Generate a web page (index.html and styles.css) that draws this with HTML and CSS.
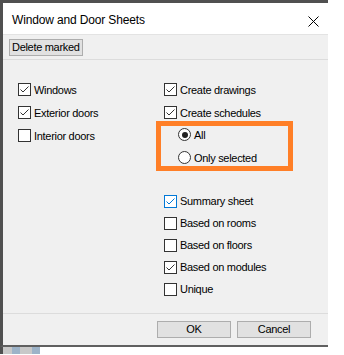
FILE: index.html
```html
<!DOCTYPE html>
<html lang="en">

<head>
    <meta charset="UTF-8">
    <meta name="viewport" content="width=device-width, initial-scale=1.0">
    <title>Window and Door Sheets</title>
    <link rel="stylesheet" href="styles.css">
</head>

<body>
    <div class="dialog">
        <div class="titlebar">
            <span class="title">Window and Door Sheets</span>
            <svg class="close" width="11" height="11" viewBox="0 0 11 11">
                <path d="M0.5 0.5 L10.5 10.5 M10.5 0.5 L0.5 10.5" stroke="#000" stroke-width="1" fill="none" />
            </svg>
        </div>

        <div class="toolbar">
            <button class="button small">Delete marked</button>
        </div>

        <div class="content">
            <div class="col left">
                <label class="row"><span class="check"><svg viewBox="0 0 11 11"><path d="M1.5 5.5 L4 8 L9.5 2.5" /></svg></span>Windows</label>
                <label class="row"><span class="check"><svg viewBox="0 0 11 11"><path d="M1.5 5.5 L4 8 L9.5 2.5" /></svg></span>Exterior doors</label>
                <label class="row"><span class="check"></span>Interior doors</label>
            </div>

            <div class="col right">
                <label class="row"><span class="check"><svg viewBox="0 0 11 11"><path d="M1.5 5.5 L4 8 L9.5 2.5" /></svg></span>Create drawings</label>
                <label class="row"><span class="check"><svg viewBox="0 0 11 11"><path d="M1.5 5.5 L4 8 L9.5 2.5" /></svg></span>Create schedules</label>

                <div class="radios">
                    <div class="marker"></div>
                    <label class="row"><span class="radio on"></span>All</label>
                    <label class="row"><span class="radio"></span>Only selected</label>
                </div>

                <div class="options">
                    <label class="row"><span class="check focus"><svg viewBox="0 0 11 11"><path d="M1.5 5.5 L4 8 L9.5 2.5" /></svg></span>Summary sheet</label>
                    <label class="row"><span class="check"></span>Based on rooms</label>
                    <label class="row"><span class="check"></span>Based on floors</label>
                    <label class="row"><span class="check"><svg viewBox="0 0 11 11"><path d="M1.5 5.5 L4 8 L9.5 2.5" /></svg></span>Based on modules</label>
                    <label class="row"><span class="check"></span>Unique</label>
                </div>
            </div>
        </div>

        <div class="footer">
            <button class="button">OK</button>
            <button class="button">Cancel</button>
        </div>
    </div>

    <div class="taskbar">
        <span class="tile"></span>
        <span class="tile blue"></span>
        <span class="tile wide"></span>
        <span class="tile blue"></span>
    </div>
</body>

</html>
```

FILE: styles.css
```css
body {
    margin: 0;
    background-color: #fff;
    font-family: "Liberation Sans", Arial, sans-serif;
    font-size: 11px;
    color: #000;
}

.dialog {
    width: 325px;
    border-top: 3px solid #505050;
    border-left: 3px solid #505050;
    border-bottom: 2px solid #606060;
    background-color: #f0f0f0;
}

.titlebar {
    height: 31px;
    background-color: #fff;
    border-bottom: 1px solid #e3e3e3;
    display: flex;
    align-items: center;
    justify-content: space-between;
    padding: 0 9px 0 9px;
}

.title {
    font-size: 12px;
    letter-spacing: -0.15px;
    margin-top: 2px;
}

.close {
    margin-top: 5px;
}

.toolbar {
    height: 25px;
    box-sizing: border-box;
    border-bottom: 1px solid #dcdcdc;
    padding: 4px 0 0 6px;
}

.button {
    font-family: "Liberation Sans", Arial, sans-serif;
    font-size: 11px;
    letter-spacing: -0.3px;
    color: #000;
    background-color: #e1e1e1;
    border: 1px solid #adadad;
    height: 17px;
    width: 74px;
    padding: 0;
    margin: 0;
    line-height: 15px;
    white-space: nowrap;
}

.button.small {
    width: auto;
    padding: 0 2px;
}

.content {
    height: 253px;
    box-sizing: border-box;
    padding: 18px 0 0 15px;
    display: flex;
}

.col.left {
    width: 146px;
}

.row {
    display: flex;
    align-items: center;
    height: 23px;
    letter-spacing: -0.3px;
}

.check {
    width: 11px;
    height: 11px;
    border: 1px solid #333;
    background-color: #fff;
    margin-right: 3px;
    flex-shrink: 0;
}

.check svg {
    display: block;
    width: 11px;
    height: 11px;
}

.check path {
    fill: none;
    stroke: #333;
    stroke-width: 1;
}

.check.focus {
    border-color: #0078d7;
}

.check.focus path {
    stroke: #0078d7;
}

.radios {
    position: relative;
    padding-left: 14px;
    margin-top: -1px;
}

.marker {
    position: absolute;
    left: -8px;
    top: -2px;
    width: 137px;
    height: 50px;
    box-sizing: border-box;
    border: 5px solid #ff7f27;
}

.radio {
    width: 11px;
    height: 11px;
    border: 1px solid #333;
    border-radius: 50%;
    background-color: #fff;
    margin-right: 3px;
    position: relative;
    flex-shrink: 0;
}

.radio.on::after {
    content: "";
    position: absolute;
    left: 2.5px;
    top: 2.5px;
    width: 6px;
    height: 6px;
    border-radius: 50%;
    background-color: #222;
}

.options {
    margin-top: 21px;
}

.options .row {
    height: 22px;
}

.footer {
    height: 32px;
    box-sizing: border-box;
    border-top: 1px solid #dcdcdc;
    padding: 7px 17px 0 0;
    display: flex;
    justify-content: flex-end;
    gap: 6px;
}

.taskbar {
    display: flex;
    height: 7px;
}

.tile {
    width: 9px;
    background-color: #c8c8c8;
}

.tile:first-child {
    width: 12px;
    border-left: 3px solid #505050;
    box-sizing: border-box;
}

.tile.blue {
    width: 8px;
    background-color: #9db3c8;
}

.tile.wide {
    width: 12px;
}
```
